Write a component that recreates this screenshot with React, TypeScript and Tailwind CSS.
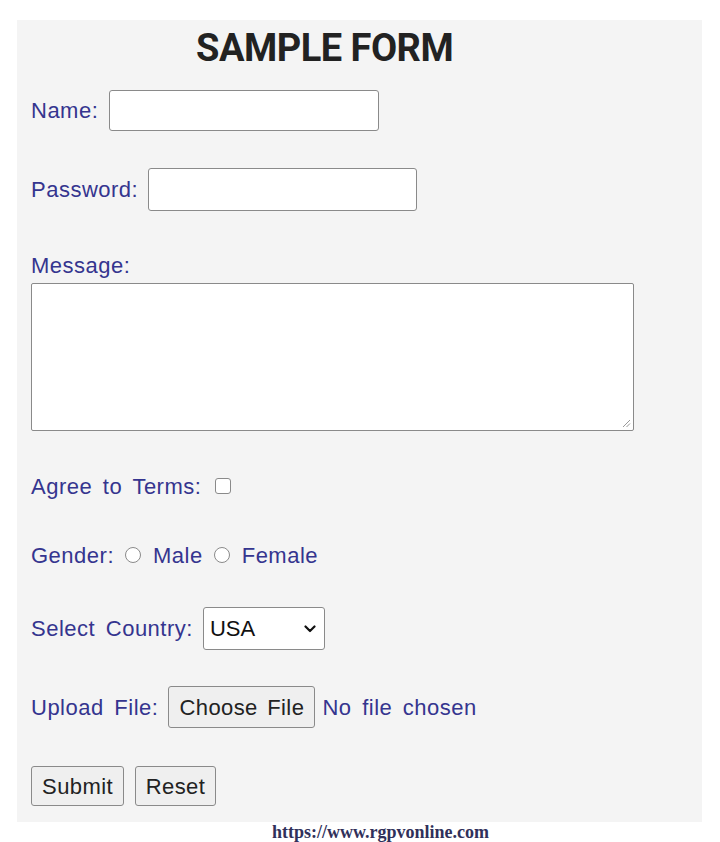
import React from "react";

const label = "text-[22px] text-[#35358f] tracking-[0.5px] [word-spacing:4px]";
const btnText = "text-[22px] text-[#222] tracking-[0.4px] [word-spacing:3px]";
const sans = { fontFamily: '"Liberation Sans", Arial, sans-serif' } as const;

function Chevron() {
  return (
    <svg width="12" height="8" viewBox="0 0 12 8" fill="none">
      <path d="M1.5 1.5 L6 6 L10.5 1.5" stroke="#111" strokeWidth="2.2" strokeLinecap="round" strokeLinejoin="round" />
    </svg>
  );
}

function Radio() {
  return <span className="block w-[16px] h-[16px] rounded-full border border-[#8a8a8a] bg-white" />;
}

export default function App() {
  return (
    <div className="min-h-[842px] w-[720px] bg-white" style={sans}>
      <div className="ml-[17px] pt-[20px]">
        <div className="w-[685px] h-[802px] bg-[#f4f4f4] pl-[14px] flex flex-col">
          {/* heading */}
          <div className="h-[56px] flex items-center pl-[165px]">
            <h1
              className="text-[38px] font-bold text-[#222] tracking-[-0.5px] leading-none"
              style={{ fontFamily: 'Roboto, "Open Sans", sans-serif' }}
            >
              SAMPLE FORM
            </h1>
          </div>

          {/* name */}
          <div className="mt-[14px] h-[41px] flex items-center gap-[11px]">
            <span className={label}>Name:</span>
            <input className="w-[270px] h-[41px] bg-white border border-[#8a8a8a] rounded-[3px] outline-none" />
          </div>

          {/* password */}
          <div className="mt-[37px] h-[43px] flex items-center gap-[10px]">
            <span className={label}>Password:</span>
            <input type="password" className="w-[269px] h-[43px] bg-white border border-[#8a8a8a] rounded-[3px] outline-none" />
          </div>

          {/* message */}
          <div className={`mt-[42px] h-[24px] flex items-center ${label}`}>Message:</div>
          <div className="mt-[6px] relative w-[603px] h-[148px] bg-white border border-[#8a8a8a] rounded-[2px]">
            <svg className="absolute right-[2px] bottom-[2px]" width="10" height="10" viewBox="0 0 10 10">
              <path d="M9 2 L2 9 M9 5.5 L5.5 9" stroke="#999" strokeWidth="1" />
            </svg>
          </div>

          {/* terms */}
          <div className="mt-[43px] h-[24px] flex items-center gap-[14px]">
            <span className={label}>Agree to Terms:</span>
            <span className="block w-[16px] h-[16px] rounded-[3px] border border-[#8a8a8a] bg-white" />
          </div>

          {/* gender */}
          <div className="mt-[45px] h-[24px] flex items-center">
            <span className={label}>Gender:</span>
            <span className="ml-[11px]"><Radio /></span>
            <span className={`ml-[12px] ${label}`}>Male</span>
            <span className="ml-[11px]"><Radio /></span>
            <span className={`ml-[12px] ${label}`}>Female</span>
          </div>

          {/* country */}
          <div className="mt-[40px] h-[43px] flex items-center gap-[10px]">
            <span className={label}>Select Country:</span>
            <div className="w-[122px] h-[43px] bg-white border border-[#8a8a8a] rounded-[3px] flex items-center justify-between pl-[6px] pr-[8px]">
              <span className="text-[22px] text-[#111]">USA</span>
              <Chevron />
            </div>
          </div>

          {/* file */}
          <div className="mt-[36px] h-[42px] flex items-center">
            <span className={label}>Upload File:</span>
            <button className={`ml-[10px] w-[147px] h-[42px] bg-[#efefef] border border-[#8a8a8a] rounded-[3px] ${btnText}`}>
              Choose File
            </button>
            <span className={`ml-[7px] ${label}`}>No file chosen</span>
          </div>

          {/* actions */}
          <div className="mt-[38px] h-[40px] flex items-center gap-[11px]">
            <button className={`w-[93px] h-[40px] bg-[#efefef] border border-[#8a8a8a] rounded-[3px] ${btnText}`}>
              Submit
            </button>
            <button className={`w-[81px] h-[40px] bg-[#efefef] border border-[#8a8a8a] rounded-[3px] ${btnText}`}>
              Reset
            </button>
          </div>
        </div>
        <div className="pl-[255px] h-[20px] flex items-center">
          <span
            className="text-[18px] font-bold text-[#30305a]"
            style={{ fontFamily: '"Liberation Serif", "Times New Roman", serif' }}
          >
            https://www.rgpvonline.com
          </span>
        </div>
      </div>
    </div>
  );
}
